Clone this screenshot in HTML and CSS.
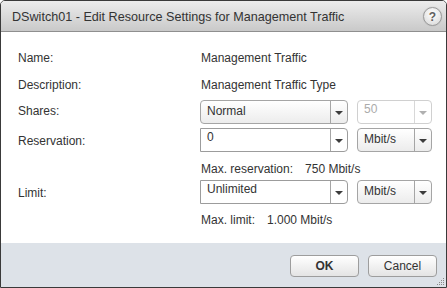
FILE: index.html
```html
<!DOCTYPE html>
<html>
<head>
<meta charset="utf-8">
<link rel="stylesheet" href="styles.css">
</head>
<body>
<div class="dialog">
  <div class="titlebar">
    <span class="title">DSwitch01 - Edit Resource Settings for Management Traffic</span>
    <span class="help">?</span>
  </div>
  <div class="content">
    <div class="row text-row r-name">
      <span class="label">Name:</span>
      <span class="value">Management Traffic</span>
    </div>
    <div class="row text-row r-desc">
      <span class="label">Description:</span>
      <span class="value">Management Traffic Type</span>
    </div>
    <div class="row ctrl-row r-shares">
      <span class="label">Shares:</span>
      <div class="controls">
        <div class="select wide"><span class="sel-text">Normal</span><span class="arrow"><i></i></span></div>
        <div class="select narrow disabled"><span class="sel-text">50</span><span class="arrow"><i></i></span></div>
      </div>
    </div>
    <div class="row ctrl-row r-res">
      <span class="label">Reservation:</span>
      <div class="controls">
        <div class="combo wide"><span class="combo-text">0</span><span class="arrow"><i></i></span></div>
        <div class="select narrow"><span class="sel-text">Mbit/s</span><span class="arrow"><i></i></span></div>
      </div>
    </div>
    <div class="row text-row r-maxres">
      <span class="label"></span>
      <span class="value">Max. reservation:<span class="num res-num">750 Mbit/s</span></span>
    </div>
    <div class="row ctrl-row r-limit">
      <span class="label">Limit:</span>
      <div class="controls">
        <div class="combo wide"><span class="combo-text">Unlimited</span><span class="arrow"><i></i></span></div>
        <div class="select narrow"><span class="sel-text">Mbit/s</span><span class="arrow"><i></i></span></div>
      </div>
    </div>
    <div class="row text-row r-maxlim">
      <span class="label"></span>
      <span class="value">Max. limit:<span class="num lim-num">1.000 Mbit/s</span></span>
    </div>
  </div>
  <div class="footer">
    <button class="btn btn-ok">OK</button>
    <button class="btn">Cancel</button>
    <svg class="grip" width="8" height="8" viewBox="0 0 8 8">
      <g fill="#8a8a8a">
        <rect x="6" y="0" width="1" height="1"/>
        <rect x="4" y="2" width="1" height="1"/><rect x="6" y="2" width="1" height="1"/>
        <rect x="2" y="4" width="1" height="1"/><rect x="4" y="4" width="1" height="1"/><rect x="6" y="4" width="1" height="1"/>
        <rect x="0" y="6" width="1" height="1"/><rect x="2" y="6" width="1" height="1"/><rect x="4" y="6" width="1" height="1"/><rect x="6" y="6" width="1" height="1"/>
      </g>
    </svg>
  </div>
</div>
</body>
</html>
```
FILE: styles.css
```css
html, body {
  margin: 0;
  padding: 0;
  background: #ffffff;
}
body {
  font-family: "Liberation Sans", Arial, sans-serif;
  font-size: 12px;
  color: #333333;
}
.dialog {
  width: 447px;
  height: 288px;
  box-sizing: border-box;
  border: 1px solid #3a3a3a;
  border-radius: 5px 5px 0 0;
  display: flex;
  flex-direction: column;
  overflow: hidden;
  position: relative;
  background: #ffffff;
}
.titlebar {
  height: 30px;
  flex: none;
  border-bottom: 1px solid #8f8f8f;
  background: linear-gradient(#ececec, #c9c9c9);
  display: flex;
  align-items: center;
  justify-content: space-between;
  padding: 0 4px 0 11px;
}
.title {
  font-size: 12.6px;
  color: #333333;
  margin-top: 1px;
}
.help {
  border-radius: 50%;
  border: 1px solid #9a9a9a;
  background: radial-gradient(circle at 50% 35%, #ffffff, #d6d6d6);
  box-shadow: 0 0 1px rgba(0,0,0,0.25);
  display: flex;
  align-items: center;
  justify-content: center;
  font-weight: bold;
  font-size: 12px;
  color: #606060;
  box-sizing: border-box;
  width: 19px;
  height: 19px;
  margin-top: 1px;
}
.content {
  flex: 1;
  padding: 0 0 0 17px;
  display: flex;
  flex-direction: column;
}
.row {
  display: grid;
  grid-template-columns: 182px 1fr;
  align-items: center;
}
.text-row {
  height: 14px;
  line-height: 14px;
}
.ctrl-row {
  height: 24px;
}
.r-name { margin-top: 19px; }
.r-desc { margin-top: 13px; }
.r-shares { margin-top: 8px; }
.r-res { margin-top: 4px; }
.r-maxres { margin-top: 10px; }
.r-limit { margin-top: 4px; }
.r-maxlim { margin-top: 9px; }
.r-shares .label { margin-top: -2px; }
.r-res .label { margin-top: 1px; }
.r-limit .label { margin-top: 1px; }
.value {
  padding-left: 1px;
}
.res-num { margin-left: 12px; }
.lim-num { margin-left: 12px; }
.controls {
  display: flex;
  gap: 9px;
  height: 24px;
}
.select, .combo {
  box-sizing: border-box;
  height: 24px;
  border: 1px solid #a5a5a5;
  display: flex;
  align-items: stretch;
}
.select {
  border-radius: 4px;
  background: linear-gradient(#ffffff, #ececec);
}
.wide { width: 148px; }
.narrow { width: 75px; }
.sel-text, .combo-text {
  flex: 1;
  padding-left: 6px;
  line-height: 20px;
  color: #333333;
  white-space: nowrap;
}
.combo {
  border-radius: 0 4px 4px 0;
  background: #ffffff;
  border-color: #9c9c9c;
}
.combo-text {
  line-height: 17px;
}
.arrow {
  width: 16px;
  border-left: 1px solid #a5a5a5;
  display: flex;
  align-items: center;
  justify-content: center;
}
.arrow i {
  display: block;
  width: 0;
  height: 0;
  border-left: 4px solid transparent;
  border-right: 4px solid transparent;
  border-top: 4px solid #3c3c3c;
  margin-top: 1px;
}
.select.disabled {
  background: #ffffff;
  border-color: #d0d0d0;
}
.select.disabled .sel-text {
  color: #ababab;
  line-height: 17px;
}
.select.disabled .arrow {
  border-left-color: #d8d8d8;
}
.select.disabled .arrow i {
  border-top-color: #b0b0b0;
}
.footer {
  height: 44px;
  flex: none;
  background: #dde2e8;
  display: flex;
  justify-content: flex-end;
  align-items: flex-start;
  gap: 9px;
  padding: 12px 9px 0 0;
  box-sizing: border-box;
  position: relative;
}
.btn {
  width: 69px;
  height: 22px;
  border: 1px solid #9d9d9d;
  border-radius: 4px;
  background: linear-gradient(#ffffff, #e4e4e4);
  font-family: "Liberation Sans", Arial, sans-serif;
  font-size: 12px;
  color: #333333;
  padding: 0;
}
.btn-ok {
  font-weight: bold;
}
.grip {
  position: absolute;
  right: 1px;
  bottom: 1px;
}
```
